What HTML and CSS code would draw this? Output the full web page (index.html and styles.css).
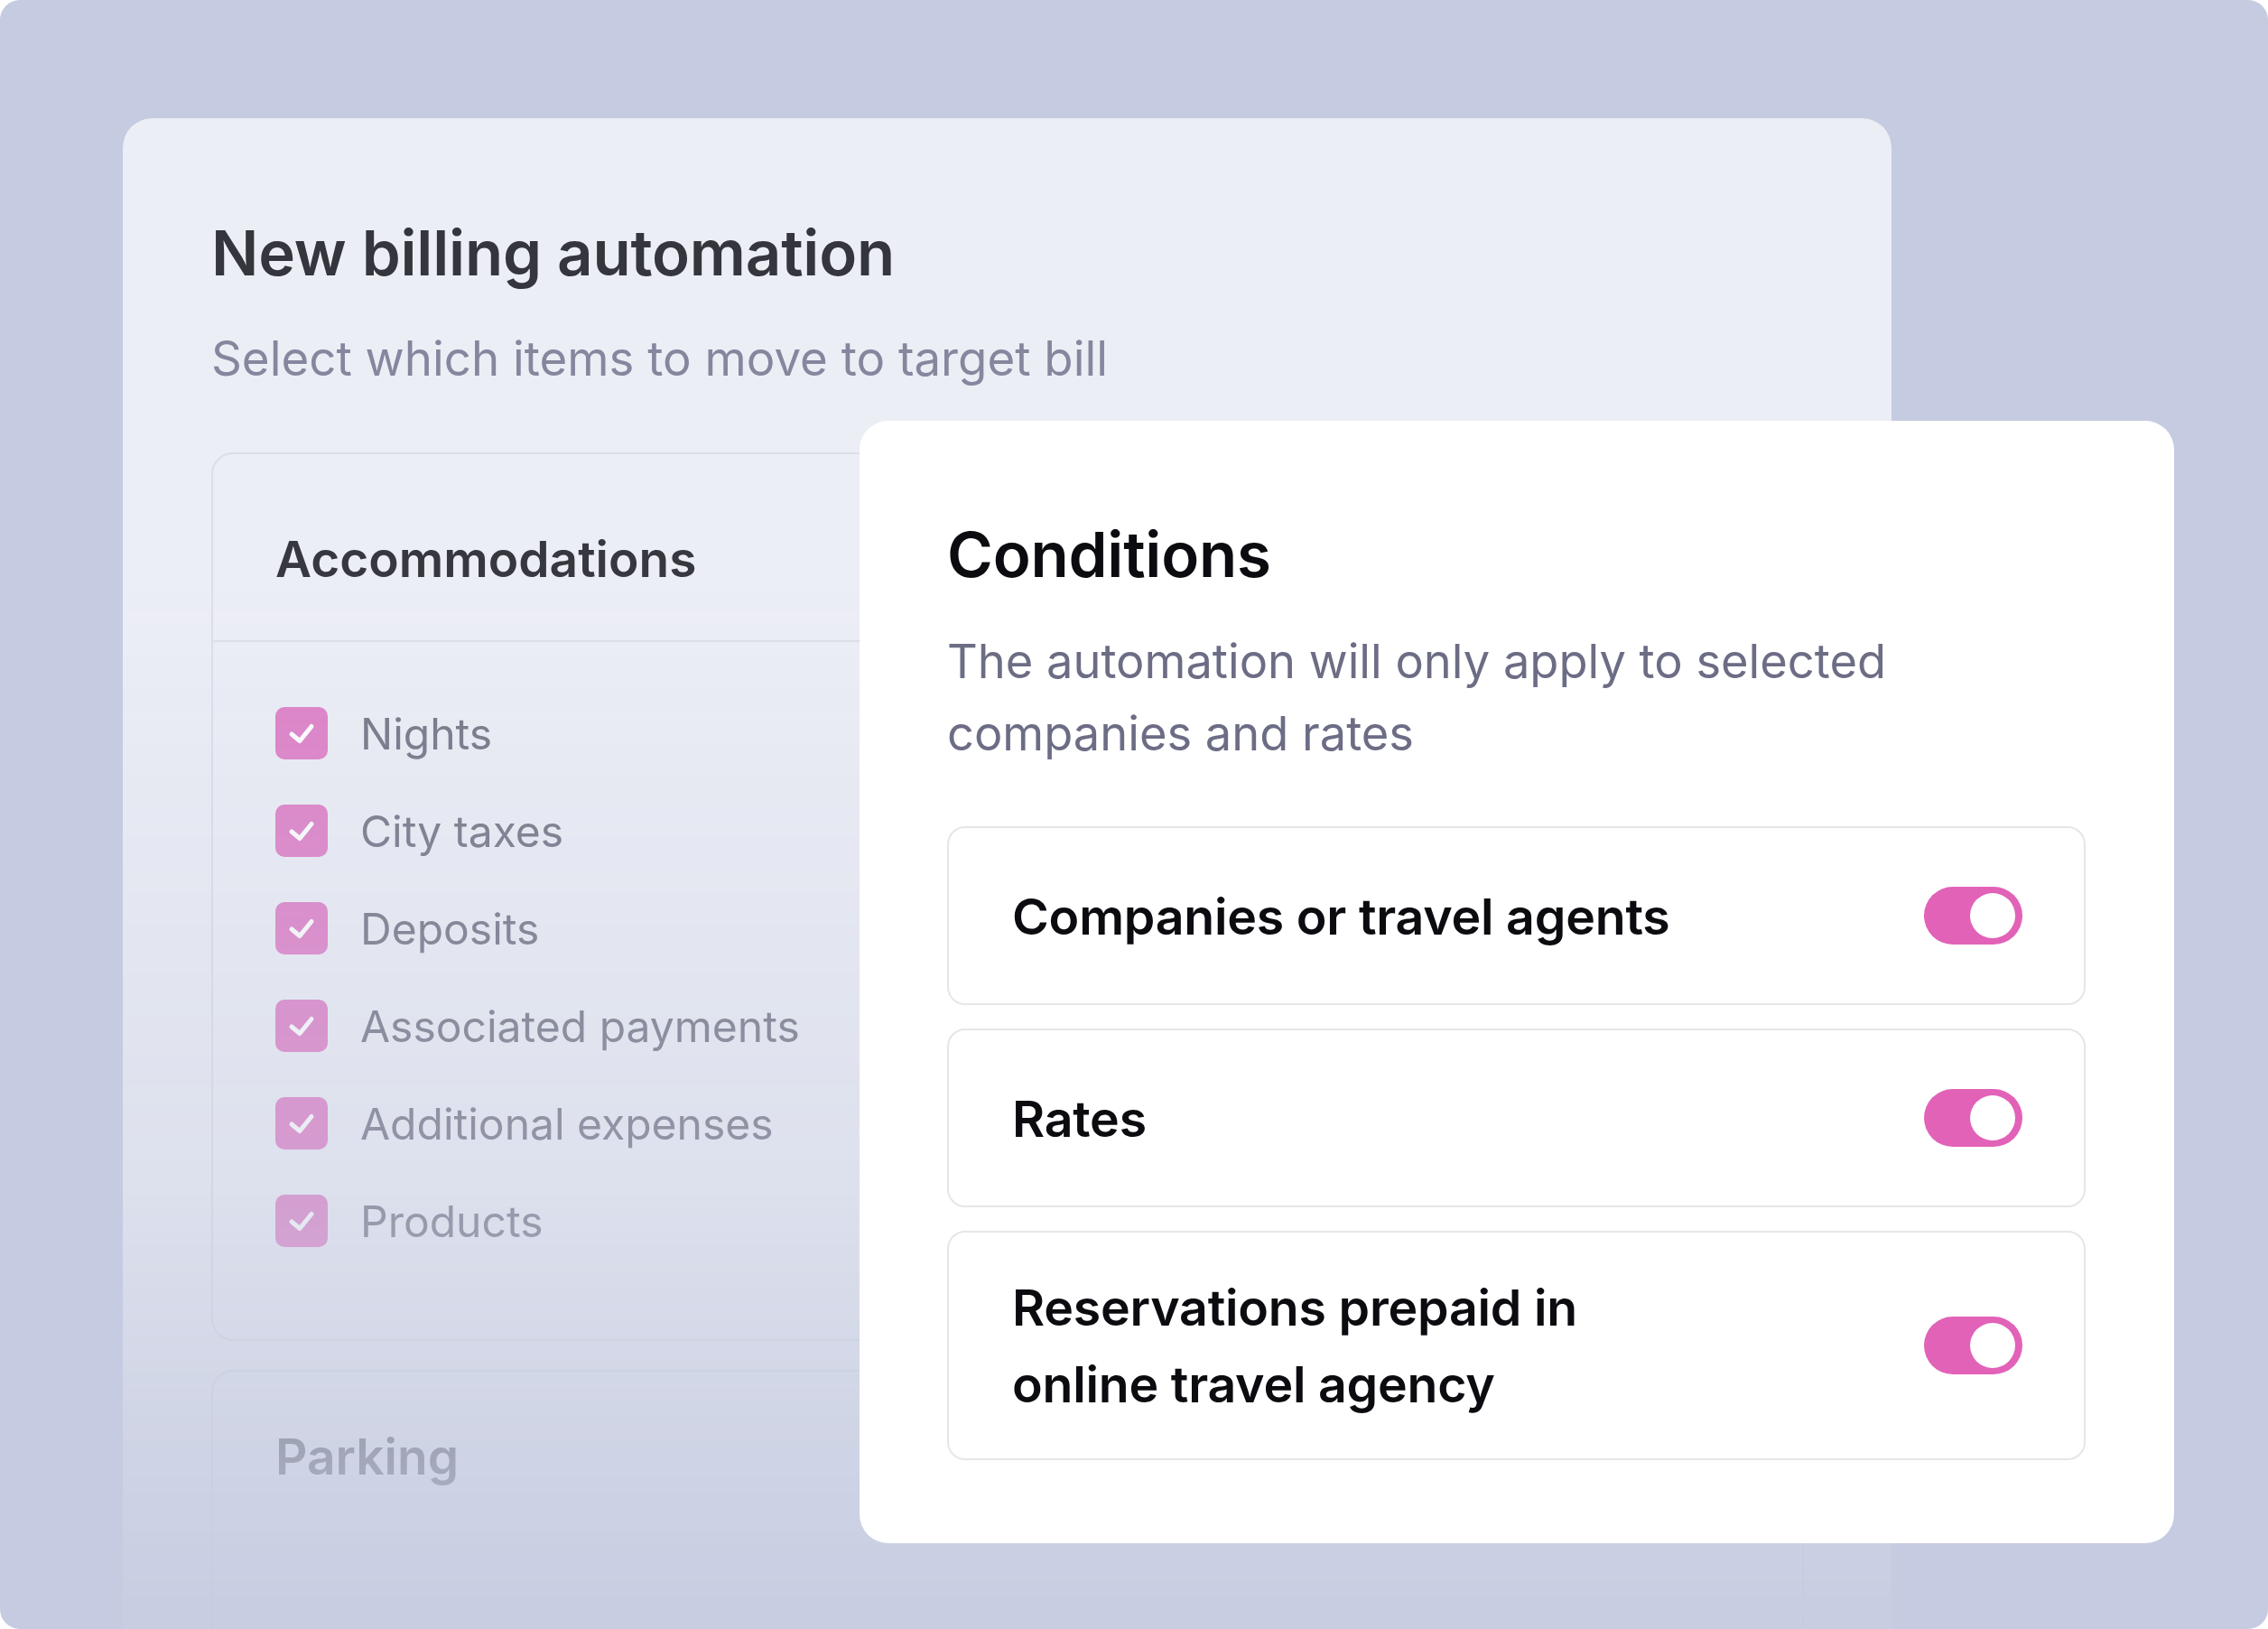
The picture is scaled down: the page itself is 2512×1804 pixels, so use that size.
FILE: index.html
```html
<!DOCTYPE html>
<html lang="en">
<head>
<meta charset="utf-8">
<title>New billing automation</title>
<link rel="stylesheet" href="styles.css">
</head>
<body>
<div class="stage">
  <section class="back-card">
    <h1 class="title">New billing automation</h1>
    <p class="subtitle">Select which items to move to target bill</p>

    <div class="group">
      <div class="group-header">Accommodations</div>
      <ul class="items">
        <li class="item"><span class="check"><svg viewBox="0 0 58 58"><polyline points="18,30 27,37.5 40,21.5"/></svg></span>Nights</li>
        <li class="item"><span class="check"><svg viewBox="0 0 58 58"><polyline points="18,30 27,37.5 40,21.5"/></svg></span>City taxes</li>
        <li class="item"><span class="check"><svg viewBox="0 0 58 58"><polyline points="18,30 27,37.5 40,21.5"/></svg></span>Deposits</li>
        <li class="item"><span class="check"><svg viewBox="0 0 58 58"><polyline points="18,30 27,37.5 40,21.5"/></svg></span>Associated payments</li>
        <li class="item"><span class="check"><svg viewBox="0 0 58 58"><polyline points="18,30 27,37.5 40,21.5"/></svg></span>Additional expenses</li>
        <li class="item"><span class="check"><svg viewBox="0 0 58 58"><polyline points="18,30 27,37.5 40,21.5"/></svg></span>Products</li>
      </ul>
    </div>

    <div class="group group-parking">
      <div class="group-header parking-header">Parking</div>
    </div>
  </section>

  <section class="front-card">
    <h2 class="title title-dark">Conditions</h2>
    <p class="desc">The automation will only apply to selected<br>companies and rates</p>

    <div class="rows">
      <div class="row">
        <span class="row-label">Companies or travel agents</span>
        <span class="toggle"><span class="knob"></span></span>
      </div>
      <div class="row">
        <span class="row-label">Rates</span>
        <span class="toggle"><span class="knob"></span></span>
      </div>
      <div class="row">
        <span class="row-label">Reservations prepaid in<br>online travel agency</span>
        <span class="toggle"><span class="knob"></span></span>
      </div>
    </div>
  </section>
</div>
</body>
</html>
```

FILE: styles.css
```css
* {
  box-sizing: border-box;
}

html, body {
  margin: 0;
  padding: 0;
  background: #ffffff;
}

body {
  font-family: Inter, "Noto Sans", "Liberation Sans", sans-serif;
}

.stage {
  position: relative;
  width: 2512px;
  height: 1804px;
  overflow: hidden;
  border-radius: 22px;
  background: #c5cbe0;
  padding: 131px 0 0 136px;
}

/* ---------- back card ---------- */

.back-card {
  width: 1959px;
  height: 1673px;
  background: #eceef5;
  border-radius: 32px 32px 0 0;
  padding: 105px 97px 0 98px;
  -webkit-mask-image: linear-gradient(to bottom, #000 0%, #000 30%, rgba(0,0,0,0.62) 70%, rgba(0,0,0,0.24) 89%, rgba(0,0,0,0.07) 100%);
  mask-image: linear-gradient(to bottom, #000 0%, #000 30%, rgba(0,0,0,0.62) 70%, rgba(0,0,0,0.24) 89%, rgba(0,0,0,0.07) 100%);
}

.title {
  margin: 0;
  font-size: 69px;
  line-height: 88px;
  font-weight: 600;
  color: #35363d;
  letter-spacing: -0.2px;
}

.subtitle {
  margin: 38px 0 0;
  font-size: 52.8px;
  line-height: 70px;
  font-weight: 400;
  color: #85879e;
}

.group {
  margin-top: 69px;
  border: 2px solid #dcdee7;
  border-radius: 24px;
}

.group-header {
  padding: 80px 69px 54px;
  font-size: 55px;
  line-height: 72px;
  font-weight: 600;
  color: #37383f;
  border-bottom: 2px solid #dcdee7;
}

.items {
  list-style: none;
  margin: 0;
  padding: 47px 69px 77px;
}

.item {
  display: flex;
  align-items: center;
  height: 108px;
  font-size: 48px;
  color: #737584;
}

.check {
  flex: none;
  width: 58px;
  height: 58px;
  margin-right: 36px;
  border-radius: 10px;
  background: #de7fc6;
  display: flex;
}

.check svg {
  width: 58px;
  height: 58px;
}

.check polyline {
  fill: none;
  stroke: #ffffff;
  stroke-width: 5;
  stroke-linecap: round;
  stroke-linejoin: round;
}

.group-parking {
  margin-top: 32px;
  height: 400px;
}

.parking-header {
  padding: 58px 69px 54px;
  border-bottom: none;
}

/* ---------- front card ---------- */

.front-card {
  position: absolute;
  left: 952px;
  top: 466px;
  width: 1456px;
  height: 1243px;
  background: #ffffff;
  border-radius: 32px;
  padding: 104px 98px 0 97px;
}

.title-dark {
  color: #0b0b10;
}

.desc {
  margin: 34px 0 0;
  font-size: 52.4px;
  line-height: 80px;
  color: #6c6d85;
}

.rows {
  margin-top: 63px;
  display: flex;
  flex-direction: column;
  gap: 26px;
}

.row {
  display: flex;
  align-items: center;
  justify-content: space-between;
  min-height: 198px;
  padding: 40px 68px 40px 70px;
  border: 2px solid #e6e6ea;
  border-radius: 20px;
}

.row-label {
  font-size: 55.4px;
  line-height: 85px;
  font-weight: 600;
  color: #0b0b10;
  letter-spacing: -0.2px;
}

.toggle {
  position: relative;
  flex: none;
  width: 109px;
  height: 64px;
  border-radius: 32px;
  background: #e262b8;
}

.knob {
  position: absolute;
  right: 8px;
  top: 7px;
  width: 50px;
  height: 50px;
  border-radius: 50%;
  background: #ffffff;
}
```
